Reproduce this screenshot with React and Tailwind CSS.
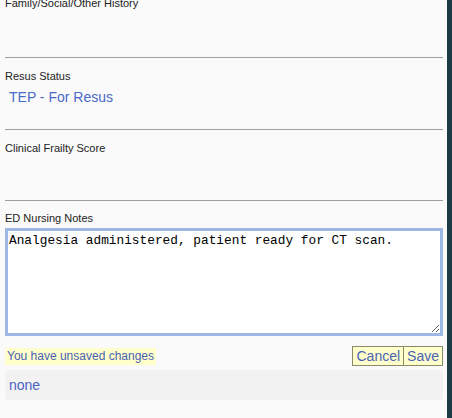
import React, { useState } from 'react';

const seccionesVacias = ['Family/Social/Other History'];

function Etiqueta({ children }) {
  return <div className="text-[11px] leading-[14px] text-[#222]">{children}</div>;
}

export default function App() {
  const [notas, setNotas] = useState('Analgesia administered, patient ready for CT scan.');

  return (
    <div className="flex h-[418px] w-[452px] overflow-hidden bg-[#fafafa] font-['Liberation_Sans',Arial,sans-serif]">
      <div className="flex w-[447px] flex-col px-[5px] pr-[4px]">
        <div className="-mt-[4px] h-[62px] border-b border-[#a0a0a0]">
          <Etiqueta>{seccionesVacias[0]}</Etiqueta>
        </div>

        <div className="h-[72px] border-b border-[#a0a0a0] pt-[11px]">
          <Etiqueta>Resus Status</Etiqueta>
          <div className="mt-[6px] pl-[4px] text-[14px] leading-[17px] text-[#4a6ac9]">TEP - For Resus</div>
        </div>

        <div className="h-[71px] border-b border-[#a0a0a0] pt-[11px]">
          <Etiqueta>Clinical Frailty Score</Etiqueta>
        </div>

        <div className="pt-[10px]">
          <Etiqueta>ED Nursing Notes</Etiqueta>
          <textarea
            className="mt-[3px] block h-[108px] w-full resize-y border-[3px] border-[#9db8e2] bg-white px-[1px] py-[2px] font-['Liberation_Mono',Consolas,monospace] text-[12.8px] leading-[16px] text-black outline-none"
            value={notas}
            onChange={(e) => setNotas(e.target.value)}
          />
        </div>

        <div className="mt-[10px] flex items-end justify-between">
          <span className="mb-[1px] bg-[#ffffcc] px-[2px] text-[12px] leading-[17px] text-[#4a62b5]">
            You have unsaved changes
          </span>
          <div className="flex">
            <button className="border border-[#8a8a6a] bg-[#ffffcc] px-[3px] text-[14px] leading-[18px] text-[#4a62b5]">
              Cancel
            </button>
            <button className="border border-l-0 border-[#8a8a6a] bg-[#ffffcc] px-[3px] text-[14px] leading-[18px] text-[#4a62b5]">
              Save
            </button>
          </div>
        </div>

        <div className="mt-[4px] flex h-[30px] items-center rounded-[4px] bg-[#f2f2f2] px-[4px] text-[14px] text-[#4a62c4]">
          none
        </div>
      </div>
      <div className="w-[5px] bg-[#1c3b45]" />
    </div>
  );
}
